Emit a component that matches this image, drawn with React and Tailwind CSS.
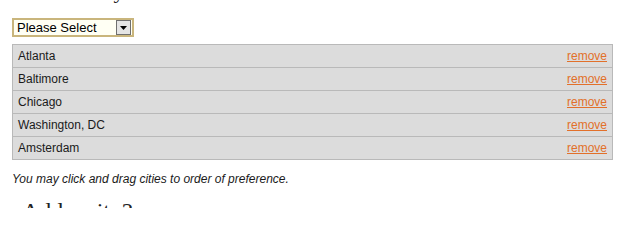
import React from "react";

const cities = ["Atlanta", "Baltimore", "Chicago", "Washington, DC", "Amsterdam"];

const App = () => {
  return (
    <div className="w-[631px] h-[208px] overflow-hidden bg-white pl-[12px] pr-[18px] flex flex-col items-start font-['Liberation_Sans',Arial,sans-serif]">
      <h2 className="mt-[-21px] h-[22px] text-[22px] leading-[24px] text-[#222] font-['Liberation_Serif',serif] whitespace-nowrap">
        Select a City
      </h2>

      {/* fake select */}
      <div className="mt-[17px] w-[122px] h-[22px] border-2 border-[#c9b57c] bg-[#fffff4] flex items-center justify-between pl-[3px] pr-[1px]">
        <span className="text-[13px] text-black leading-none">Please Select</span>
        <span className="w-[15px] h-[15px] border border-[#6f6f6f] bg-[#e4e4e4] flex items-center justify-center">
          <svg width="7" height="4" viewBox="0 0 7 4">
            <path d="M0 0h7L3.5 4z" fill="#000" />
          </svg>
        </span>
      </div>

      <ul className="mt-[7px] w-[601px] border border-[#b9b9b9] bg-[#dcdcdc]">
        {cities.map((city, i) => (
          <li
            key={city}
            className={`flex items-center justify-between pl-[5px] pr-[5px] text-[12px] text-[#1a1a1a] ${i > 0 ? "border-t border-[#b9b9b9] h-[23px]" : "h-[22px]"}`}
          >
            <span>{city}</span>
            <a href="#" className="text-[#e2702a] underline">remove</a>
          </li>
        ))}
      </ul>

      <p className="mt-[12px] text-[12px] italic text-[#1a1a1a] leading-[14px]">
        You may click and drag cities to order of preference.
      </p>

      <h2 className="mt-[13px] pl-[10px] text-[24px] leading-[24px] text-[#222] font-['Liberation_Serif',serif] whitespace-nowrap">
        Add a city?
      </h2>
    </div>
  );
};

export default App;
